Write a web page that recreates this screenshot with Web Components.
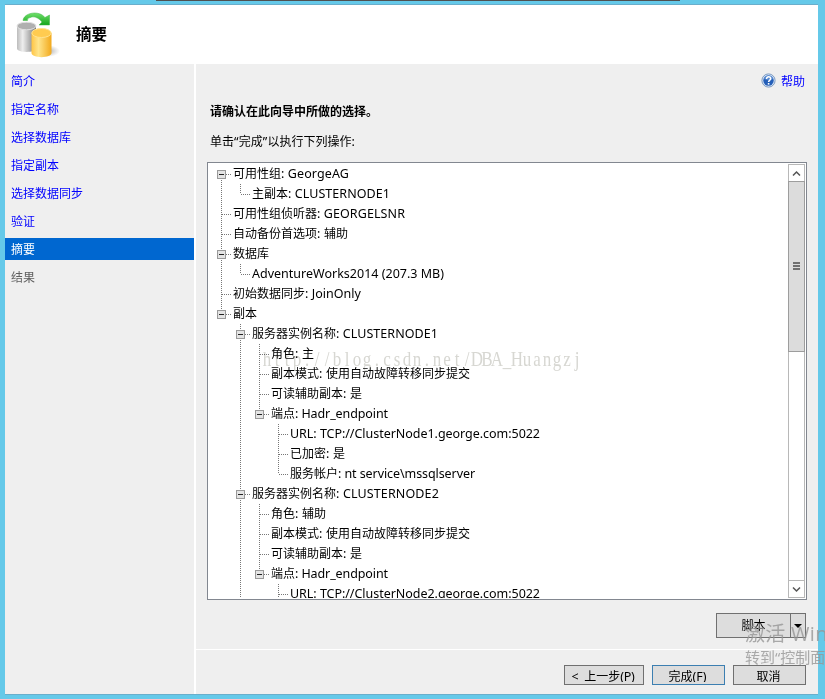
<!DOCTYPE html>
<html lang="zh-CN">
<head>
<meta charset="utf-8">
<title>摘要</title>
<style>
html,body{margin:0;height:699px;overflow:hidden}
body{background:#65c9e9;font:12px/20px "Noto Sans","Noto Sans CJK SC",sans-serif;color:#000}
</style>
</head>
<body>
<wizard-window></wizard-window>
<script>
const define=(name,html,init)=>customElements.define(name,class extends HTMLElement{
  constructor(){super();this.attachShadow({mode:'open'});}
  connectedCallback(){this.shadowRoot.innerHTML=html;if(init)init.call(this,this.shadowRoot);}
});

// Text whose Latin runs are set slightly larger than the Chinese ones; "fit" gives its total width.
define('ui-text',`<style>:host{display:inline-block;white-space:pre;font:12px/20px "Noto Sans CJK SC",sans-serif}
.l{font-family:"Noto Sans","Noto Sans CJK SC",sans-serif;font-size:12.5px;line-height:1}</style><span id="t"></span>`,function(r){
  const t=r.getElementById('t');
  for(const part of this.getAttribute('text').match(/[\u2e80-\u9fff\u3002]+|[^\u2e80-\u9fff\u3002]+/g)){
    const s=document.createElement('span');
    if(!/[\u2e80-\u9fff\u3002]/.test(part))s.className='l';
    s.textContent=part;t.append(s);
  }
  const fit=+this.getAttribute('fit');
  if(fit){
    const ls=[...t.querySelectorAll('.l')],n=ls.reduce((a,s)=>a+s.textContent.length,0);
    if(n){const d=(fit-t.getBoundingClientRect().width)/n;ls.forEach(s=>s.style.letterSpacing=d+'px');}
  }
});

define('wizard-header',`<style>:host{display:flex;align-items:center;height:59px;background:#fff;box-sizing:border-box;padding-left:9px}
h1{margin:0 0 4px 14px;font:bold 15.5px/20px "Noto Sans CJK SC",sans-serif}svg{display:block}</style>
<svg width="48" height="50" viewBox="14 10 48 50">
<defs><linearGradient id="g"><stop stop-color="#bcbcbc"/><stop offset=".3" stop-color="#eee"/><stop offset="1" stop-color="#777"/></linearGradient>
<linearGradient id="y"><stop stop-color="#ffc545"/><stop offset=".35" stop-color="#ffe58c"/><stop offset="1" stop-color="#f2a91c"/></linearGradient>
<linearGradient id="v" x2="0" y2="1"><stop stop-color="#6fe06a"/><stop offset="1" stop-color="#16a51c"/></linearGradient>
<radialGradient id="s"><stop stop-color="#777" stop-opacity=".7"/><stop offset="1" stop-color="#999" stop-opacity="0"/></radialGradient></defs>
<ellipse cx="47" cy="51" rx="13" ry="6" fill="url(#s)"/>
<path d="M17 26v22.500c0 4.500 19 4.500 19 0V26z" fill="url(#g)"/><ellipse cx="26.500" cy="26" rx="9.500" ry="3.800" fill="#b0b0b0" stroke="#e1e1e1"/>
<path d="M31.500 33v20c0 5.500 20 5.500 20 0V33z" fill="url(#y)"/><ellipse cx="41.500" cy="33" rx="9.700" ry="4.500" fill="#ffcb50" stroke="#ffe391"/>
<path d="M23 20.500c1-8 16-10.500 22-3l4.500-2.500v10H39l3-3c-4-5-9-6-11.500-4.500q-3.500 0-3 3z" fill="url(#v)" stroke="#3fb544" stroke-width=".5"/>
</svg><h1>摘要</h1>`);

define('nav-item',`<style>:host{display:block;height:22px;line-height:22px;padding-left:6px;color:#00f;font-family:"Noto Sans CJK SC",sans-serif}
:host([selected]){background:#0067d0;color:#fff}:host([disabled]){color:#606060}</style><slot></slot>`);

define('wizard-nav',`<style>:host{display:flex;flex-direction:column;gap:6px;width:189px;padding-top:6px;box-sizing:border-box}</style><slot></slot>`);

define('help-link',`<style>:host{display:flex;justify-content:flex-end;align-items:center;gap:5px;color:#00f;height:20px;font-family:"Noto Sans CJK SC",sans-serif}svg{margin-bottom:1px}</style>
<svg width="15" height="15" viewBox="0 0 15 15"><circle cx="7.500" cy="7.500" r="6.600" fill="#d9e6f5" stroke="#7393bd" stroke-width=".9"/><circle cx="7.500" cy="7.500" r="5.200" fill="#245fb8"/><path d="M3 6a4.600 4.600 0 0 1 9 0q-4 2-9 0" fill="#6c9bdc" opacity=".7"/><path d="M5.500 6c0-3 4.200-2.600 4.200-.3C9.700 7.200 7.600 7 7.600 9" fill="none" stroke="#fff" stroke-width="1.500"/><rect x="6.800" y="10" width="1.600" height="1.600" fill="#fff"/></svg><span>帮助</span>`);

// One tree row. guides holds one character per level: "|" or "T" full line, "L" last child, "F" first root, " " none.
define('tree-row',`<style>:host{display:block;height:20px;flex:none;padding-left:4px}
.r{display:flex}
svg{display:block;flex:none;shape-rendering:crispEdges}.d{stroke:#777;stroke-dasharray:1 1;fill:none}
ui-text{flex:none;margin-top:-1px}</style><div class="r"></div>`,function(r){
  const g=this.getAttribute('guides'),w=19*g.length;let s='';
  [...g].forEach((c,i)=>{
    const x=8.5+19*i;
    if(c!==' '){const a=c==='F'?10:0,b=c==='L'?10:20;s+=`<path class="d" d="M${x} ${a}V${b}"/>`;}
    if(i===g.length-1){
      s+=`<path class="d" d="M${x+.5} 10.5h9"/>`;
      if(this.hasAttribute('open'))s+=`<rect x="${x-4}" y="6.5" width="8" height="8" fill="#e4e4e4" stroke="#999"/><path d="M${x-2.5} 10.5h5" stroke="#222"/>`;
    }
  });
  r.querySelector('.r').innerHTML=`<svg width="${w+1}" height="20">${s}</svg><ui-text text="${this.getAttribute('text')}" fit="${this.getAttribute('fit')||''}"></ui-text>`;
});

define('tree-view',`<style>:host{display:block;flex:1;height:434px;overflow:hidden}</style><div class="x"></div>`,function(r){
  const rows=[
  ['F','可用性组: GeorgeAG',116,1],['|L','主副本: CLUSTERNODE1',138],['T','可用性组侦听器: GEORGELSNR',172],['T','自动备份首选项: 辅助',115],
  ['T','数据库',36,1],['|L','AdventureWorks2014 (207.3 MB)',192],['T','初始数据同步: JoinOnly',128],['L','副本',24,1],
  [' T','服务器实例名称: CLUSTERNODE1',186,1],[' |T','角色: 主',43],[' |T','副本模式: 使用自动故障转移同步提交',199],[' |T','可读辅助副本: 是',91],
  [' |L','端点: Hadr_endpoint',117,1],[' | T','URL: TCP://ClusterNode1.george.com:5022',250],[' | T','已加密: 是',55],[' | L','服务帐户: nt service\\mssqlserver',185],
  [' T','服务器实例名称: CLUSTERNODE2',187,1],[' |T','角色: 辅助',55],[' |T','副本模式: 使用自动故障转移同步提交',199],[' |T','可读辅助副本: 是',91],
  [' |L','端点: Hadr_endpoint',117,1],[' | T','URL: TCP://ClusterNode2.george.com:5022',250]];
  r.querySelector('.x').innerHTML=rows.map(([g,t,f,o])=>`<tree-row guides="${g}" text="${t}" fit="${f}" ${o?'open':''}></tree-row>`).join('');
});

define('scroll-bar',`<style>:host{display:flex;flex-direction:column;width:17px;height:434px;box-sizing:border-box;background:#fff;border:1px solid #b8b8b8}
div{box-sizing:border-box;display:flex;align-items:center;justify-content:center}
.b{height:16px;flex:none}.t{height:171px;margin:0 -1px;border:1px solid #9d9d9d;background:#dcdcdc}
.t svg{margin-bottom:1px}
.s{flex:1;border-bottom:1px solid #b8b8b8}svg{display:block}</style>
<div class="b"><svg width="9" height="7"><path d="M1 5.500 4.500 2 8 5.500" fill="none" stroke="#555" stroke-width="1.500"/></svg></div>
<div class="t"><svg width="7" height="8"><path d="M0 1h7M0 4h7M0 7h7" stroke="#707070" stroke-width="2"/></svg></div>
<div class="s"></div>
<div class="b"><svg width="9" height="7"><path d="M1 1.500 4.500 5 8 1.500" fill="none" stroke="#555" stroke-width="1.500"/></svg></div>`);

define('list-box',`<style>:host{display:flex;box-sizing:border-box;width:600px;height:438px;border:1px solid #828790;background:#fff;padding:1px}</style><slot></slot>`);

define('ui-button',`<style>:host{display:flex;box-sizing:border-box;height:20px;border:1px solid #707070;background:#ddd;justify-content:center;overflow:hidden}
:host([primary]){border-color:#3c7fb1}:host([split]){height:25px}
.c{height:16px;overflow:hidden;flex:1;text-align:center;padding-right:2px}
:host([split]) .c{height:23px;padding:0;margin-top:1px}
.a{display:none;width:14px;border-left:1px solid #707070;align-items:center;justify-content:center}:host([split]) .a{display:flex}</style>
<div class="c"></div><div class="a"><svg width="8" height="4"><path d="M0 0h8L4 4z"/></svg></div>`,function(r){
  r.querySelector('.c').innerHTML=`<ui-text text="${this.getAttribute('text')}" fit="${this.getAttribute('fit')||''}"></ui-text>`;
});

define('summary-page',`<style>:host{display:flex;flex-direction:column;width:622px;box-sizing:border-box}
.m{height:585px;box-sizing:border-box;padding:7px 11px 0}
help-link{margin-right:2px}
p{margin:0 0 0 3px;height:20px}.b{margin-top:10px;font:bold 12px/20px "Noto Sans CJK SC",sans-serif}
.i{margin:10px 0 11px 3px}
.sp{display:flex;justify-content:flex-end;margin:13px 1px 0 0}
.f{display:flex;justify-content:flex-end;gap:8px;padding:15px 12px 0 0;border-top:1px solid #fff;height:44px;box-sizing:border-box;flex:1}</style>
<div class="m"><help-link></help-link><p class="b">请确认在此向导中所做的选择。</p><p class="i"><ui-text text="单击“完成”以执行下列操作:" fit="145"></ui-text></p>
<list-box><tree-view></tree-view><scroll-bar></scroll-bar></list-box>
<div class="sp"><ui-button split text="脚本" style="width:90px"></ui-button></div></div>
<div class="f"><ui-button text="&lt;  上一步(P)" fit="63" style="width:80px"></ui-button><ui-button primary text="完成(F)" fit="38" style="width:73px"></ui-button><ui-button text="取消" style="width:73px"></ui-button></div>`);

// Narrow serif letters, each centred in its own 10px cell; multiplied so the tree's text stays black.
define('blog-mark',`<style>:host{position:absolute;left:262px;top:346px;pointer-events:none;mix-blend-mode:multiply}svg{display:block}text{font:20px "Liberation Serif",serif;fill:#d7d7d2;text-anchor:middle}</style><svg width="322" height="30"><text y="20" transform="scale(.85 1)"></text></svg>`,function(r){
  const t=r.querySelector('text'),s='http://blog.csdn.net/DBA_Huangzj';
  t.setAttribute('x',[...s].map((c,i)=>(5+i*10)/.85).join(' '));t.textContent=s;
});

define('activation-mark',`<style>:host{position:absolute;left:745px;top:621px;width:80px;height:46px;overflow:hidden;white-space:nowrap;color:rgba(150,150,150,.8);pointer-events:none;font-family:"Open Sans","Noto Sans CJK SC",sans-serif}
div{height:26px;line-height:26px;font-size:20px;letter-spacing:.3px}.s{height:20px;line-height:20px;font-size:15px;letter-spacing:0}</style><div>激活 Win</div><div class="s">转到“控制面</div>`);

define('wizard-window',`<style>:host{display:block;position:relative;width:825px;height:699px;overflow:hidden}
.t{height:1px;margin:0 145px 3px 156px;background:#505050}
.w{width:813px;height:689px;margin-left:5px;border:solid #6aaecb;border-width:1px 0;background:#efefef}
.body{display:grid;grid-template-columns:189px 2px 622px;height:630px}.v{background:#fff}</style>
<div class="t"></div><div class="w"><wizard-header></wizard-header><div class="body">
<wizard-nav><nav-item>简介</nav-item><nav-item>指定名称</nav-item><nav-item>选择数据库</nav-item><nav-item>指定副本</nav-item><nav-item>选择数据同步</nav-item><nav-item>验证</nav-item><nav-item selected>摘要</nav-item><nav-item disabled>结果</nav-item></wizard-nav>
<div class="v"></div><summary-page></summary-page></div></div>
<blog-mark></blog-mark><activation-mark></activation-mark>`);
</script>
</body>
</html>
